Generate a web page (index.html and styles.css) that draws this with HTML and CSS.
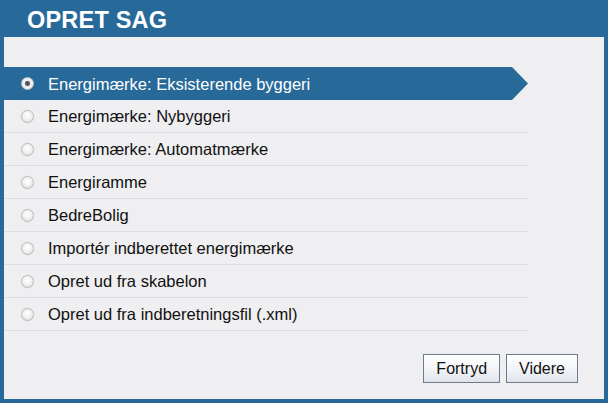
FILE: index.html
```html
<!DOCTYPE html>
<html lang="da">
<head>
<meta charset="utf-8">
<title>Opret sag</title>
<link rel="stylesheet" href="styles.css">
</head>
<body>
<div class="dialog">
  <div class="header">OPRET SAG</div>
  <div class="panel">
    <ul class="options">
      <li class="option selected"><span class="radio"></span><span class="label">Energimærke: Eksisterende byggeri</span></li>
      <li class="option"><span class="radio"></span><span class="label">Energimærke: Nybyggeri</span></li>
      <li class="option"><span class="radio"></span><span class="label">Energimærke: Automatmærke</span></li>
      <li class="option"><span class="radio"></span><span class="label">Energiramme</span></li>
      <li class="option"><span class="radio"></span><span class="label">BedreBolig</span></li>
      <li class="option"><span class="radio"></span><span class="label">Importér indberettet energimærke</span></li>
      <li class="option"><span class="radio"></span><span class="label">Opret ud fra skabelon</span></li>
      <li class="option"><span class="radio"></span><span class="label">Opret ud fra indberetningsfil (.xml)</span></li>
    </ul>
    <div class="footer">
      <button class="btn">Fortryd</button>
      <button class="btn">Videre</button>
    </div>
  </div>
</div>
</body>
</html>
```
FILE: styles.css
```css
html, body {
  margin: 0;
  padding: 0;
  background: #276a99;
}
body {
  width: 608px;
  height: 403px;
  overflow: hidden;
  font-family: "Liberation Sans", Arial, sans-serif;
}
.dialog {
  display: flex;
  flex-direction: column;
  height: 403px;
  padding: 0 4px 4px 4px;
  box-sizing: border-box;
}
.header {
  height: 37px;
  flex: none;
  color: #ffffff;
  font-weight: bold;
  font-size: 23.5px;
  line-height: 40px;
  padding-left: 23px;
  letter-spacing: 0.2px;
}
.panel {
  flex: 1;
  background: #efeef0;
  display: flex;
  flex-direction: column;
  padding-top: 30px;
}
.options {
  list-style: none;
  margin: 0;
  padding: 0;
  width: 524px;
}
.option {
  display: flex;
  align-items: center;
  height: 32px;
  border-bottom: 1px solid #dcdfe7;
  font-size: 16.5px;
  color: #111111;
}
.option .radio {
  width: 13px;
  height: 13px;
  border-radius: 50%;
  margin-left: 17px;
  margin-right: 14px;
  box-sizing: border-box;
  border: 1px solid #bdbdbd;
  background: radial-gradient(circle at 50% 40%, #ffffff 0%, #f2f2f2 45%, #d6d6d6 100%);
  box-shadow: 0 0 1px rgba(0, 0, 0, 0.15);
  flex: none;
}
.option .label {
  padding-top: 1px;
}
.option.selected {
  background: #276a99;
  color: #ffffff;
  height: 33px;
  border-bottom-width: 0;
  clip-path: polygon(0 0, calc(100% - 16px) 0, 100% 50%, calc(100% - 16px) 100%, 0 100%);
}
.option.selected .radio {
  border-color: #c8c8c8;
  background: radial-gradient(circle at 50% 50%, #444444 0%, #666666 28%, #f4f4f4 40%, #dedede 100%);
}
.footer {
  margin-top: auto;
  display: flex;
  justify-content: flex-end;
  gap: 6px;
  padding: 0 26px 16px 0;
}
.btn {
  height: 29px;
  padding: 0 12px;
  border: 1px solid #6d7b8e;
  border-radius: 0;
  background: linear-gradient(#ffffff 0%, #f4f5f8 50%, #dfe3ea 100%);
  font-family: "Liberation Sans", Arial, sans-serif;
  font-size: 16px;
  color: #111111;
  line-height: 27px;
}
```
